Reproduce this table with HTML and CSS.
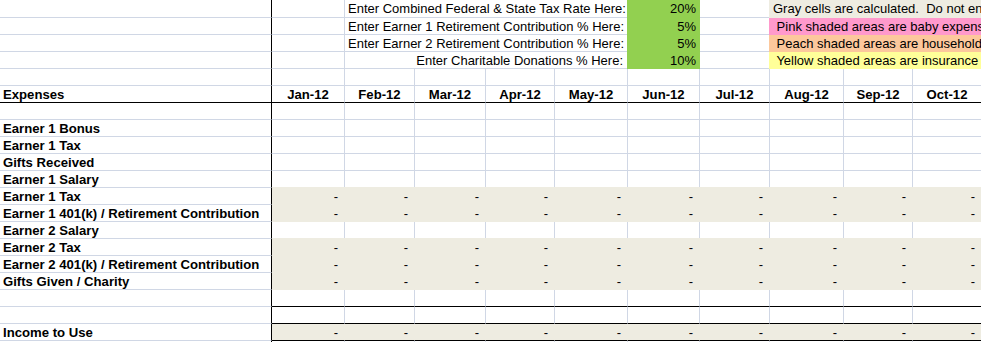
FILE: index.html
```html
<!DOCTYPE html>
<html lang="en">
<head>
<meta charset="utf-8">
<title>Budget</title>
<link rel="stylesheet" href="styles.css">
</head>
<body>
<div class="sheet">
  <!-- row 1 -->
  <div class="c a"></div><div class="c"></div>
  <div class="c lbl">Enter Combined Federal &amp; State Tax Rate Here:</div>
  <div class="c inp">20%</div><div class="c"></div>
  <div class="c key k-gray">Gray cells are calculated.  Do not enter data in these cells.</div>
  <!-- row 2 -->
  <div class="c a"></div><div class="c"></div>
  <div class="c lbl">Enter Earner 1 Retirement Contribution % Here:</div>
  <div class="c inp">5%</div><div class="c"></div>
  <div class="c key k-pink"> Pink shaded areas are baby expenses.</div>
  <!-- row 3 -->
  <div class="c a"></div><div class="c"></div>
  <div class="c lbl">Enter Earner 2 Retirement Contribution % Here:</div>
  <div class="c inp">5%</div><div class="c"></div>
  <div class="c key k-peach"> Peach shaded areas are household expenses.</div>
  <!-- row 4 -->
  <div class="c a"></div><div class="c"></div>
  <div class="c lbl">Enter Charitable Donations % Here:</div>
  <div class="c inp">10%</div><div class="c"></div>
  <div class="c key k-yellow"> Yellow shaded areas are insurance expenses.</div>
  <!-- row 5 -->
  <div class="c a"></div><div class="c"></div><div class="c"></div><div class="c"></div><div class="c"></div><div class="c"></div><div class="c"></div><div class="c"></div><div class="c"></div><div class="c"></div><div class="c"></div>
  <!-- row 6 header -->
  <div class="c a hd">Expenses</div>
  <div class="c hd mo">Jan-12</div><div class="c hd mo">Feb-12</div><div class="c hd mo">Mar-12</div><div class="c hd mo">Apr-12</div><div class="c hd mo">May-12</div><div class="c hd mo">Jun-12</div><div class="c hd mo">Jul-12</div><div class="c hd mo">Aug-12</div><div class="c hd mo">Sep-12</div><div class="c hd mo">Oct-12</div>
  <!-- row 7 -->
  <div class="c a"></div><div class="c"></div><div class="c"></div><div class="c"></div><div class="c"></div><div class="c"></div><div class="c"></div><div class="c"></div><div class="c"></div><div class="c"></div><div class="c"></div>
  <!-- row 8 -->
  <div class="c a name">Earner 1 Bonus</div><div class="c"></div><div class="c"></div><div class="c"></div><div class="c"></div><div class="c"></div><div class="c"></div><div class="c"></div><div class="c"></div><div class="c"></div><div class="c"></div>
  <!-- row 9 -->
  <div class="c a name">Earner 1 Tax</div><div class="c"></div><div class="c"></div><div class="c"></div><div class="c"></div><div class="c"></div><div class="c"></div><div class="c"></div><div class="c"></div><div class="c"></div><div class="c"></div>
  <!-- row 10 -->
  <div class="c a name">Gifts Received</div><div class="c"></div><div class="c"></div><div class="c"></div><div class="c"></div><div class="c"></div><div class="c"></div><div class="c"></div><div class="c"></div><div class="c"></div><div class="c"></div>
  <!-- row 11 -->
  <div class="c a name">Earner 1 Salary</div><div class="c"></div><div class="c"></div><div class="c"></div><div class="c"></div><div class="c"></div><div class="c"></div><div class="c"></div><div class="c"></div><div class="c"></div><div class="c"></div>
  <!-- row 12 -->
  <div class="c a name">Earner 1 Tax</div><div class="c calc">-</div><div class="c calc">-</div><div class="c calc">-</div><div class="c calc">-</div><div class="c calc">-</div><div class="c calc">-</div><div class="c calc">-</div><div class="c calc">-</div><div class="c calc">-</div><div class="c calc">-</div>
  <!-- row 13 -->
  <div class="c a name">Earner 1 401(k) / Retirement Contribution</div><div class="c calc">-</div><div class="c calc">-</div><div class="c calc">-</div><div class="c calc">-</div><div class="c calc">-</div><div class="c calc">-</div><div class="c calc">-</div><div class="c calc">-</div><div class="c calc">-</div><div class="c calc">-</div>
  <!-- row 14 -->
  <div class="c a name">Earner 2 Salary</div><div class="c"></div><div class="c"></div><div class="c"></div><div class="c"></div><div class="c"></div><div class="c"></div><div class="c"></div><div class="c"></div><div class="c"></div><div class="c"></div>
  <!-- row 15 -->
  <div class="c a name">Earner 2 Tax</div><div class="c calc">-</div><div class="c calc">-</div><div class="c calc">-</div><div class="c calc">-</div><div class="c calc">-</div><div class="c calc">-</div><div class="c calc">-</div><div class="c calc">-</div><div class="c calc">-</div><div class="c calc">-</div>
  <!-- row 16 -->
  <div class="c a name">Earner 2 401(k) / Retirement Contribution</div><div class="c calc">-</div><div class="c calc">-</div><div class="c calc">-</div><div class="c calc">-</div><div class="c calc">-</div><div class="c calc">-</div><div class="c calc">-</div><div class="c calc">-</div><div class="c calc">-</div><div class="c calc">-</div>
  <!-- row 17 -->
  <div class="c a name">Gifts Given / Charity</div><div class="c calc">-</div><div class="c calc">-</div><div class="c calc">-</div><div class="c calc">-</div><div class="c calc">-</div><div class="c calc">-</div><div class="c calc">-</div><div class="c calc">-</div><div class="c calc">-</div><div class="c calc">-</div>
  <!-- row 18 -->
  <div class="c a"></div><div class="c rule"></div><div class="c rule"></div><div class="c rule"></div><div class="c rule"></div><div class="c rule"></div><div class="c rule"></div><div class="c rule"></div><div class="c rule"></div><div class="c rule"></div><div class="c rule"></div>
  <!-- row 19 -->
  <div class="c a"></div><div class="c rule"></div><div class="c rule"></div><div class="c rule"></div><div class="c rule"></div><div class="c rule"></div><div class="c rule"></div><div class="c rule"></div><div class="c rule"></div><div class="c rule"></div><div class="c rule"></div>
  <!-- row 20 -->
  <div class="c a name">Income to Use</div><div class="c total">-</div><div class="c total">-</div><div class="c total">-</div><div class="c total">-</div><div class="c total">-</div><div class="c total">-</div><div class="c total">-</div><div class="c total">-</div><div class="c total">-</div><div class="c total">-</div>
  <!-- row 21 -->
  <div class="c a"></div><div class="c"></div><div class="c"></div><div class="c"></div><div class="c"></div><div class="c"></div><div class="c"></div><div class="c"></div><div class="c"></div><div class="c"></div><div class="c"></div>
</div>
</body>
</html>
```

FILE: styles.css
```css
html, body {
  margin: 0;
  padding: 0;
  background: #ffffff;
  overflow: hidden;
  width: 981px;
  height: 342px;
}

.sheet {
  display: grid;
  grid-template-columns: 272px 73px 70px 71px 69px 73px 72px 70px 74px 69px 69px;
  grid-template-rows: 18px;
  grid-auto-rows: 17px;
  width: 982px;
  font-family: "Liberation Sans", Arial, sans-serif;
  font-size: 13px;
  color: #000000;
}

.c {
  box-sizing: border-box;
  border-right: 1px solid #d0d7e5;
  border-bottom: 1px solid #d0d7e5;
  padding: 1px 3px 0;
  line-height: 16px;
  white-space: pre;
  overflow: hidden;
}

.a {
  border-right-color: #000000;
}

.lbl {
  grid-column: span 4;
  text-align: right;
  padding-right: 4px;
}

.inp {
  background: #92d050;
  border-right-color: #92d050;
  border-bottom-color: #92d050;
  box-shadow: -1px 0 0 #92d050;
  text-align: right;
}

.key {
  grid-column: span 3;
  box-shadow: -1px 0 0 var(--bg);
  background: var(--bg);
  border-right-color: var(--bg);
  border-bottom-color: var(--bg);
}

.k-gray { --bg: #eeece1; }
.k-pink { --bg: #ff99cc; }
.k-peach { --bg: #fcc89c; }
.k-yellow { --bg: #ffff99; }

.hd {
  font-weight: bold;
  font-size: 13.15px;
  border-bottom-color: #000000;
}

.mo {
  text-align: center;
}

.name {
  font-weight: bold;
  font-size: 13.15px;
}

.calc {
  background: #eeece1;
  border-right-color: #eeece1;
  border-bottom-color: #eeece1;
  box-shadow: 0 -1px 0 #eeece1;
  text-align: right;
  padding-right: 6px;
}

.rule {
  border-bottom-color: #000000;
}

.total {
  background: #eeece1;
  border-right-color: #eeece1;
  border-bottom-color: #000000;
  text-align: right;
  padding-right: 6px;
}
```
